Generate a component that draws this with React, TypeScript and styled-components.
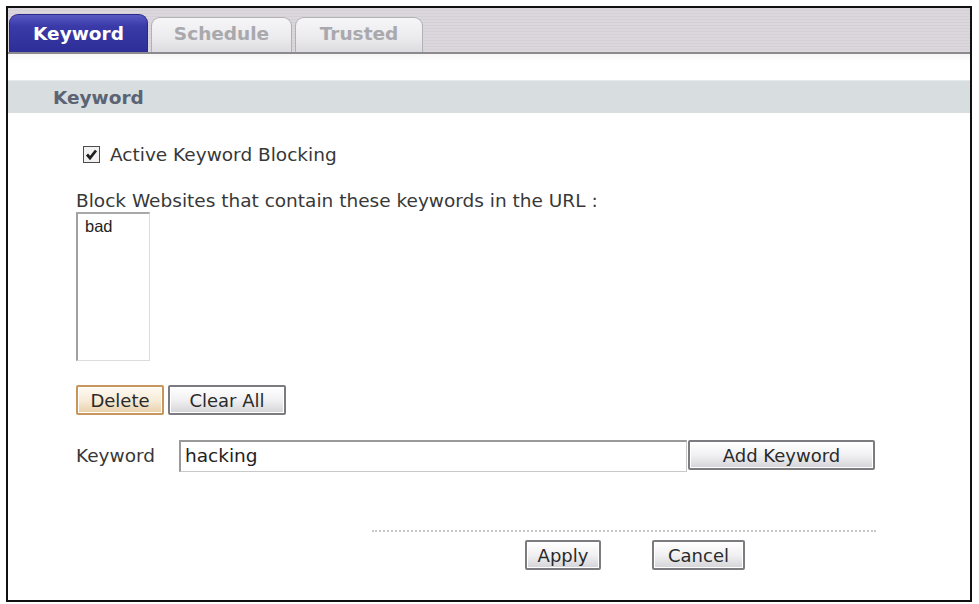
import styled, { createGlobalStyle } from "styled-components";

const GlobalStyle = createGlobalStyle`
  html, body {
    margin: 0;
    padding: 0;
    background: #ffffff;
  }
  body {
    font-family: "DejaVu Sans", Verdana, sans-serif;
    color: #333;
  }
`;

const Frame = styled.div`
  margin: 6px 0 0 6px;
  width: 962px;
  height: 592px;
  border: 2px solid #111;
  display: flex;
  flex-direction: column;
  background: #fff;
  box-shadow: inset 2px 0 2px -1px #b8b8c8;
`;

const TabBar = styled.div`
  height: 44px;
  flex-shrink: 0;
  display: flex;
  align-items: flex-end;
  gap: 3px;
  padding-left: 1px;
  border-bottom: 2px solid #8c8a8e;
  background: repeating-linear-gradient(
    to bottom,
    #dcd7dc 0px,
    #dcd7dc 2px,
    #d4d0d5 2px,
    #d4d0d5 3px
  );
`;

const Tab = styled.div<{ $active?: boolean; $width: number }>`
  width: ${(p) => p.$width}px;
  height: ${(p) => (p.$active ? 38 : 35)}px;
  box-sizing: border-box;
  border-radius: 9px 9px 0 0;
  display: flex;
  align-items: center;
  justify-content: center;
  font-weight: bold;
  font-size: 18.5px;
  color: ${(p) => (p.$active ? "#ffffff" : "#a9a9ad")};
  background: ${(p) =>
    p.$active
      ? "linear-gradient(to bottom, #5a5ac4 0%, #3a3aa8 30%, #2e2e98 100%)"
      : "linear-gradient(to bottom, #f6f5f7 0%, #ebeaed 60%, #dcdbdf 100%)"};
  border: ${(p) => (p.$active ? "1px solid #2a2a88" : "1px solid #b2b1b6")};
  border-bottom: none;
  padding-bottom: ${(p) => (p.$active ? 0 : 3)}px;
`;

const Body = styled.div`
  flex: 1;
  padding-top: 26px;
  display: flex;
  flex-direction: column;
  background: linear-gradient(to bottom, #f6f6f6 0px, #ffffff 8px);
`;

const SectionHeader = styled.div`
  height: 32px;
  background: #d8dde0;
  border-top: 1px solid #e6eaec;
  display: flex;
  align-items: center;
  padding-left: 45px;
  font-weight: bold;
  font-size: 18.5px;
  color: #5c6474;
`;

const Content = styled.div`
  padding-left: 68px;
  display: flex;
  flex-direction: column;
  font-size: 18.5px;
  color: #383838;
`;

const CheckRow = styled.label`
  margin-top: 31px;
  margin-left: 7px;
  height: 20px;
  display: flex;
  align-items: center;
  gap: 10px;
`;

const CheckBox = styled.span`
  width: 15px;
  height: 15px;
  border: 1px solid #4c4c4c;
  background: #f2f2f2;
  display: flex;
  align-items: center;
  justify-content: center;
`;

const Caption = styled.div`
  margin-top: 26px;
  line-height: 22px;
`;

const ListBox = styled.div`
  width: 74px;
  height: 149px;
  box-sizing: border-box;
  border-top: 2px solid #a8a8a8;
  border-left: 2px solid #a0a0a0;
  border-right: 1px solid #dcdcdc;
  border-bottom: 1px solid #dcdcdc;
  padding: 3px 0 0 7px;
  font-family: "Liberation Sans", Arial, sans-serif;
  font-size: 16.5px;
  color: #222;
`;

const ButtonRow = styled.div`
  margin-top: 24px;
  display: flex;
  align-items: center;
  gap: 4px;
`;

const Button = styled.button<{ $width: number; $accent?: boolean }>`
  width: ${(p) => p.$width}px;
  height: 30px;
  box-sizing: border-box;
  font-family: "DejaVu Sans", Verdana, sans-serif;
  font-size: 18px;
  color: #2a2a2a;
  border-radius: 2px;
  border: 2px solid ${(p) => (p.$accent ? "#c8965a" : "#7c7c80")};
  background: ${(p) =>
    p.$accent
      ? "linear-gradient(to bottom, #fffaf2 0%, #f6ead6 55%, #e8cfa8 100%)"
      : "linear-gradient(to bottom, #ffffff 0%, #f1f1f3 50%, #d4d4d8 100%)"};
  box-shadow: inset 0 0 0 1px #ffffff;
  padding: 0;
`;

const KeywordRow = styled.div`
  margin-top: 25px;
  display: flex;
  align-items: flex-start;
`;

const FieldLabel = styled.span`
  width: 103px;
  line-height: 32px;
`;

const TextInput = styled.div`
  width: 508px;
  height: 32px;
  box-sizing: border-box;
  border-top: 2px solid #9a9a9a;
  border-left: 2px solid #9a9a9a;
  border-right: 1px solid #c8c8c8;
  border-bottom: 1px solid #c8c8c8;
  padding-left: 4px;
  line-height: 28px;
  font-size: 18.5px;
  color: #222;
  margin-right: 1px;
`;

const Footer = styled.div`
  box-sizing: border-box;
  margin: 58px 0 0 364px;
  width: 504px;
  border-top: 2px dotted #c8c8cc;
  padding: 8px 0 0 153px;
  display: flex;
  gap: 51px;
`;

const CheckMark = () => (
  <svg width="13" height="13" viewBox="0 0 13 13">
    <path d="M2 6.5 L5 10 L11 2.5" fill="none" stroke="#1e1e1e" strokeWidth="2.8" />
  </svg>
);

export default function App() {
  return (
    <>
      <GlobalStyle />
      <Frame>
        <TabBar>
          <Tab $active $width={139}>Keyword</Tab>
          <Tab $width={141}>Schedule</Tab>
          <Tab $width={128}>Trusted</Tab>
        </TabBar>
        <Body>
          <SectionHeader>Keyword</SectionHeader>
          <Content>
            <CheckRow>
              <CheckBox>
                <CheckMark />
              </CheckBox>
              Active Keyword Blocking
            </CheckRow>
            <Caption>Block Websites that contain these keywords in the URL :</Caption>
            <ListBox>bad</ListBox>
            <ButtonRow>
              <Button $accent $width={88}>Delete</Button>
              <Button $width={118}>Clear All</Button>
            </ButtonRow>
            <KeywordRow>
              <FieldLabel>Keyword</FieldLabel>
              <TextInput>hacking</TextInput>
              <Button $width={187}>Add Keyword</Button>
            </KeywordRow>
          </Content>
          <Footer>
            <Button $width={76}>Apply</Button>
            <Button $width={93}>Cancel</Button>
          </Footer>
        </Body>
      </Frame>
    </>
  );
}
